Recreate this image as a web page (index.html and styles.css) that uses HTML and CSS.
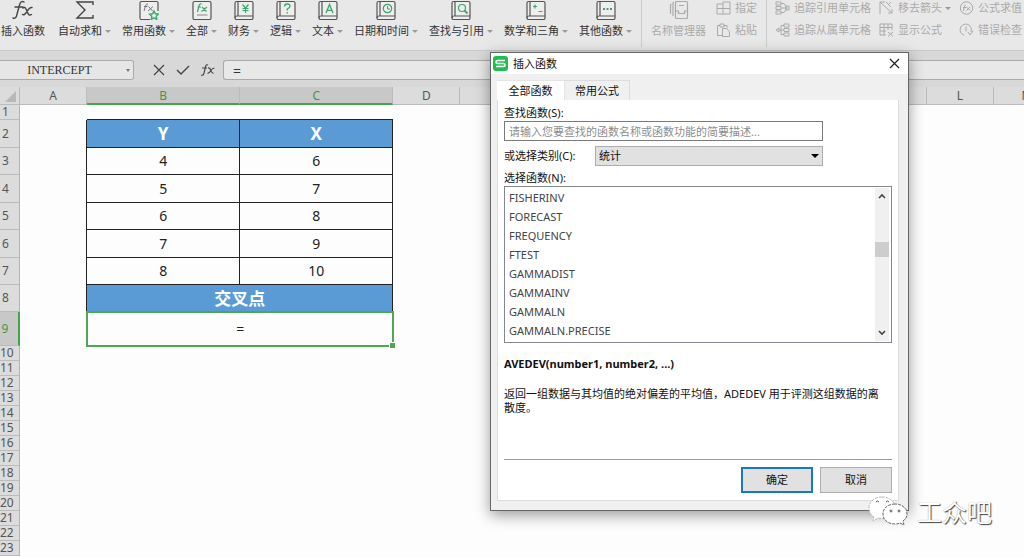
FILE: index.html
```html
<!DOCTYPE html>
<html lang="zh-CN">
<head>
<meta charset="utf-8">
<title>插入函数</title>
<link rel="stylesheet" href="styles.css">
</head>
<body>
<svg class="defs" aria-hidden="true">
  <symbol id="book" viewBox="0 0 20 20"><g fill="none" stroke="#555" stroke-width="1.2"><rect x="1" y="1.500" width="18" height="18" rx="1.500" fill="#eee"/><path d="M4 2v14M1 18q0-2 2-2h16"/></g></symbol>
</svg>
<div class="app">
  <header class="ribbon">
    <div class="tools">
      <button class="tool first"><svg width="24" height="20" viewBox="0 0 24 20"><g fill="none" stroke="#444" stroke-width="1.4" stroke-linecap="round"><path d="M13 2q-3-2-4.500 3L5.500 16q-1 3-3.500 2M4 7h8M12 8q2-1.500 3 1l2 4.500q1 2.500 3.500 1M21 7.500q-2-.5-4 2.500l-2.500 3.500q-1.500 2-3 1"/></g></svg><span>插入函数</span></button>
      <button class="tool"><svg width="20" height="20" viewBox="0 0 20 20"><path d="M18 5V2H2l8 8-8 8h16v-3" fill="none" stroke="#444" stroke-width="1.400"/></svg><span class="drop">自动求和</span></button>
      <button class="tool"><svg width="20" height="20" viewBox="0 0 20 20"><path d="M11 19.500H2.500q-1.500 0-1.500-1.500V3q0-1.500 1.500-1.500h15q1.500 0 1.500 1.500v8" fill="#eee" stroke="#555" stroke-width="1.200"/><path d="M9 4q-2-.5-2.500 2L5 11M5 6.500h3.500M9.500 6.500l4 4.500M14 6.500l-5 4.500" fill="none" stroke="#777"/><path d="M15 11l1.400 2.800 3 .4-2.200 2.100.5 3-2.700-1.400-2.700 1.400.5-3-2.200-2.100 3-.4z" fill="#e4f3e9" stroke="#3aa66a" stroke-width="1.400"/></svg><span class="drop">常用函数</span></button>
      <button class="tool"><svg width="20" height="20" viewBox="0 0 20 20"><rect x="1" y="1.500" width="18" height="18" rx="1.500" fill="#eee" stroke="#555" stroke-width="1.200"/><path d="M9.500 4q-2-.5-2.500 2l-1.500 6M5.500 7H9M10 7l4.500 4.500M15 7l-5.500 4.500" fill="none" stroke="#3aa66a" stroke-width="1.200"/><path d="M5 15h10.500" stroke="#888"/></svg><span class="drop">全部</span></button>
      <button class="tool"><svg width="20" height="20" viewBox="0 0 20 20"><use href="#book"/><path d="M8.500 4.500l3 3.500 3-3.500M11.500 8v5M8.500 8.500h6M8.500 10.500h6" fill="none" stroke="#3aa66a" stroke-width="1.200"/></svg><span class="drop">财务</span></button>
      <button class="tool"><svg width="20" height="20" viewBox="0 0 20 20"><use href="#book"/><path d="M8.500 6.500q0-2.500 2.800-2.500t2.700 2.300q0 1.500-2.700 2.700v1.500M11.300 12v1.500" fill="none" stroke="#3aa66a" stroke-width="1.300"/></svg><span class="drop">逻辑</span></button>
      <button class="tool"><svg width="20" height="20" viewBox="0 0 20 20"><use href="#book"/><path d="M8 13l3.500-8.500L15 13M9.200 10.300h4.600" fill="none" stroke="#3aa66a" stroke-width="1.300"/></svg><span class="drop">文本</span></button>
      <button class="tool"><svg width="20" height="20" viewBox="0 0 20 20"><use href="#book"/><circle cx="11.500" cy="8.500" r="4.200" fill="none" stroke="#3aa66a" stroke-width="1.200"/><path d="M11.500 6v3h2.500" fill="none" stroke="#3aa66a"/></svg><span class="drop">日期和时间</span></button>
      <button class="tool"><svg width="20" height="20" viewBox="0 0 20 20"><use href="#book"/><circle cx="11" cy="8" r="3.500" fill="none" stroke="#3aa66a" stroke-width="1.200"/><path d="M13.500 10.500l3 3" stroke="#3aa66a" stroke-width="1.800"/></svg><span class="drop">查找与引用</span></button>
      <button class="tool"><svg width="20" height="20" viewBox="0 0 20 20"><use href="#book"/><path d="M9 4.500v4M7 6.500h4M12.500 11.500h4" stroke="#3aa66a" stroke-width="1.200"/></svg><span class="drop">数学和三角</span></button>
      <button class="tool"><svg width="20" height="20" viewBox="0 0 20 20"><use href="#book"/><path d="M7 9h2M10.500 9h2M14 9h2" stroke="#3aa66a" stroke-width="1.800"/></svg><span class="drop">其他函数</span></button>
    </div>
    <div class="tools manage">
      <button class="tool" disabled><svg width="20" height="20" viewBox="0 0 20 20"><g fill="none" stroke="#aaa" stroke-width="1.200"><path d="M1.500 14V5q0-1 1-1M4 16V3.500q0-1 1-1M7.500 1.500h10q1 0 1 1v15q0 1-1 1h-10q-1 0-1-1v-15q0-1 1-1z"/><path d="M6.500 11h3v2.500h6V11h3M10 5.500h5"/></g></svg><span>名称管理器</span></button>
      <div class="stack">
        <button class="mini" disabled><svg width="15" height="14" viewBox="0 0 15 14"><path d="M1 3h6V1h7v12H1zM7 3v10M1 7.500h13" fill="none" stroke="#aaa"/></svg>指定</button>
        <button class="mini" disabled><svg width="15" height="14" viewBox="0 0 15 14"><path d="M6 12.500H1.500v-10H4M8 2.500h3V5M4 1h4v3H4zM6.500 5.500h4l3 3v5h-7z" fill="none" stroke="#aaa"/></svg>粘贴</button>
      </div>
    </div>
    <div class="tools audit">
      <div class="stack">
        <button class="mini" disabled><svg width="15" height="14" viewBox="0 0 15 14"><path d="M1 1h5v3H1zM1 5.500h5v3H1zM1 10h5v3H1zM6 2.500h3l3 4.500M6 11.500h3l3-4.500M6 7h5M11 5h3v4h-3z" fill="none" stroke="#aaa"/></svg>追踪引用单元格</button>
        <button class="mini" disabled><svg width="15" height="14" viewBox="0 0 15 14"><path d="M9 1h5v3H9zM9 5.500h5v3H9zM9 10h5v3H9zM9 2.500H6v9h3M6 7h3M4 5L1 7l3 2zM4 7h2" fill="none" stroke="#aaa"/></svg>追踪从属单元格</button>
      </div>
      <div class="stack">
        <button class="mini" disabled><svg width="15" height="14" viewBox="0 0 15 14"><path d="M1 1l12 11M1 1h5M1 1v12M13 12V8M13 12H9M7 1l5 5M12 1L9 4" fill="none" stroke="#aaa"/></svg><span class="drop">移去箭头</span></button>
        <button class="mini" disabled><svg width="15" height="14" viewBox="0 0 15 14"><path d="M7 12H1V1h12v6M1 4.500h12M5 1v11M9 1v6M1 8h6M9 9l5 4.500M14 9l-5 4.500" fill="none" stroke="#aaa"/></svg>显示公式</button>
      </div>
      <div class="stack">
        <button class="mini" disabled><svg width="15" height="14" viewBox="0 0 15 14"><circle cx="7.500" cy="7" r="6.200" fill="none" stroke="#aaa"/><path d="M7 4q-1.500 0-2 3l-.5 3M4 6.500h3M7.500 6l3.500 3.500M11 6L7.500 9.500" fill="none" stroke="#aaa"/></svg>公式求值</button>
        <button class="mini" disabled><svg width="15" height="14" viewBox="0 0 15 14"><path d="M5 12.200A5.700 5.700 0 1 1 12 9M7 3.500v5M9 9l2 3 3-4" fill="none" stroke="#aaa"/></svg>错误检查</button>
      </div>
    </div>
  </header>

  <div class="formula-bar">
    <div class="name-box"><input aria-label="名称框" value="INTERCEPT"><i class="caret"></i></div>
    <div class="formula-actions">
      <button aria-label="取消输入"><svg width="14" height="14" viewBox="0 0 14 14"><path d="M2 2l10 10M12 2L2 12" stroke="#444" stroke-width="1.200"/></svg></button>
      <button aria-label="确认输入"><svg width="14" height="14" viewBox="0 0 14 14"><path d="M1 7l4 4 8-8" fill="none" stroke="#444" stroke-width="1.400"/></svg></button>
      <button aria-label="函数"><svg width="16" height="14" viewBox="0 0 16 14"><path d="M8 2Q6 1 5.500 4L4 10q-.5 3-3 2M2 5h5M8 5q2-.5 2.500 2t3 3.500M14.500 5q-2 0-3.500 2.500T7.500 10.500" fill="none" stroke="#444" stroke-width="1.200"/></svg></button>
    </div>
    <input class="formula" aria-label="编辑栏" value="=">
  </div>

  <main class="sheet">
    <table class="grid">
      <colgroup><col class="c-head"><col class="c-std"><col class="c-wide"><col class="c-wide"><col class="c-std"><col class="c-std"><col class="c-slim"><col class="c-std"><col class="c-slim"><col class="c-std"><col class="c-slim"><col class="c-std"><col class="c-std"><col class="c-std"></colgroup>
      <thead>
        <tr><th class="corner"><svg width="11" height="11" viewBox="0 0 11 11"><path d="M11 0v11H0z" fill="#b8b8b8"/></svg></th><th>A</th><th class="on">B</th><th class="on">C</th><th>D</th><th>E</th><th>F</th><th>G</th><th>H</th><th>I</th><th>J</th><th>K</th><th>L</th><th>M</th></tr>
      </thead>
      <tbody>
        <tr><th>1</th><td></td><td class="above"></td><td class="above"></td></tr>
        <tr class="mid"><th>2</th><td class="before"></td><td class="cell title">Y</td><td class="cell title">X</td></tr>
        <tr class="mid"><th>3</th><td class="before"></td><td class="cell">4</td><td class="cell">6</td></tr>
        <tr class="mid"><th>4</th><td class="before"></td><td class="cell">5</td><td class="cell">7</td></tr>
        <tr class="mid"><th>5</th><td class="before"></td><td class="cell">6</td><td class="cell">8</td></tr>
        <tr class="mid"><th>6</th><td class="before"></td><td class="cell">7</td><td class="cell">9</td></tr>
        <tr class="mid"><th>7</th><td class="before"></td><td class="cell">8</td><td class="cell">10</td></tr>
        <tr class="mid last"><th>8</th><td class="before"></td><td class="cell title merged" colspan="2">交叉点</td></tr>
        <tr class="tall"><th class="on">9</th><td></td><td class="active" colspan="2">=</td></tr>
        <tr><th>10</th></tr><tr><th>11</th></tr><tr><th>12</th></tr><tr><th>13</th></tr><tr><th>14</th></tr><tr><th>15</th></tr><tr><th>16</th></tr><tr><th>17</th></tr><tr><th>18</th></tr><tr><th>19</th></tr><tr><th>20</th></tr><tr><th>21</th></tr><tr><th>22</th></tr><tr><th>23</th></tr>
      </tbody>
    </table>
  </main>

  <section class="dialog" role="dialog" aria-labelledby="dlg-title">
    <div class="titlebar">
      <svg width="15" height="15" viewBox="0 0 15 15"><rect width="15" height="15" rx="3" fill="#1fbf4f"/><path d="M12 4.500H4.500Q3 4.500 3 6t1.500 1.500h6Q12 7.500 12 9t-1.500 1.500H3" fill="none" stroke="#fff" stroke-width="1.600"/></svg>
      <h1 id="dlg-title">插入函数</h1>
      <button class="close" aria-label="关闭"><svg width="11" height="11" viewBox="0 0 11 11"><path d="M1 1l9 9M10 1l-9 9" stroke="#222" stroke-width="1.200"/></svg></button>
    </div>
    <div class="tabs" role="tablist">
      <button class="tab current" role="tab" aria-selected="true">全部函数</button>
      <button class="tab" role="tab" aria-selected="false">常用公式</button>
    </div>
    <div class="panel">
      <label for="search">查找函数(S):</label>
      <input id="search" class="search" placeholder="请输入您要查找的函数名称或函数功能的简要描述...">
      <div class="category">
        <label for="category">或选择类别(C):</label>
        <div class="select"><select id="category"><option>统计</option></select><i class="arrow"></i></div>
      </div>
      <label for="functions">选择函数(N):</label>
      <div class="list">
        <select id="functions" size="8">
          <option>FISHERINV</option><option>FORECAST</option><option>FREQUENCY</option><option>FTEST</option><option>GAMMADIST</option><option>GAMMAINV</option><option>GAMMALN</option><option>GAMMALN.PRECISE</option>
        </select>
        <div class="scroll" aria-hidden="true">
          <svg width="8" height="6" viewBox="0 0 8 6"><path d="M1 5l3-3 3 3" fill="none" stroke="#444" stroke-width="1.600"/></svg>
          <span class="track"><span class="thumb"></span></span>
          <svg width="8" height="6" viewBox="0 0 8 6"><path d="M1 1l3 3 3-3" fill="none" stroke="#444" stroke-width="1.600"/></svg>
        </div>
      </div>
      <h2>AVEDEV(number1, number2, ...)</h2>
      <p>返回一组数据与其均值的绝对偏差的平均值，ADEDEV 用于评测这组数据的离散度。</p>
      <div class="actions">
        <button class="btn primary">确定</button>
        <button class="btn">取消</button>
      </div>
    </div>
  </section>

  <div class="watermark">
    <svg width="40" height="32" viewBox="0 0 40 32"><g fill="#fff" stroke="#666" stroke-width="1" stroke-dasharray="3 1"><path d="M14 1C6 1 1 6 1 12q0 6 5 9l-1 4 5-3q12 2 17-5 2-5-1-10-4-6-12-6z" stroke="#bbb"/><path d="M27 8c-7 0-12 4-12 10s5 10 12 10q3 0 5-1l4 2-1-4q4-3 4-7c0-6-5-10-12-10z"/></g><g fill="none" stroke="#555"><path d="M8 6q1.500-2 3 0M18 6q1.500-2 3 0"/><circle cx="23" cy="15" r="1"/><circle cx="31" cy="15" r="1"/></g></svg>
    <span>工众吧</span>
  </div>
</div>
</body>
</html>
```

FILE: styles.css
```css
* { box-sizing: border-box; }
body {
  margin: 0;
  background: #fdfdfd;
  color: #333;
  font: 11px/16px "Noto Sans", "Noto Sans CJK SC", sans-serif;
}
button, input, select { font: inherit; color: inherit; margin: 0; }
button { padding: 0; border: 0; background: none; white-space: nowrap; }
svg { display: block; flex: none; }
.defs { position: absolute; width: 0; height: 0; }
.app { position: relative; height: 100vh; overflow: hidden; }

.ribbon {
  display: flex;
  height: 51px;
  background: #e8e8e8;
  border-bottom: 1px solid #c8c8c8;
  overflow: hidden;
}
.tools { display: flex; flex: none; align-items: flex-start; gap: 11px; padding-left: 1px; }
.tool { display: flex; flex-direction: column; align-items: center; gap: 3px; }
.first { margin-right: 2px; }
.drop::after {
  content: "";
  display: inline-block;
  margin-left: 3px;
  vertical-align: 2px;
  border: 3px solid transparent;
  border-top-color: #999;
  border-bottom: 0;
}
.manage, .audit {
  height: 47px;
  margin-left: 9px;
  padding-left: 9px;
  border-left: 1px solid #ccc;
  gap: 10px;
}
.audit { gap: 8px; padding-left: 8px; }
.tool:disabled, .mini:disabled { color: #aaa; }
.stack { display: flex; flex-direction: column; gap: 6px; }
.mini { display: flex; align-items: center; gap: 4px; }

.formula-bar {
  display: flex;
  align-items: center;
  height: 36px;
  padding: 2px 0 0;
  background: #d8d8d8;
}
.name-box {
  display: flex;
  align-items: center;
  width: 134px;
  height: 20px;
  padding-right: 3px;
  border: 1px solid #aaa;
  border-left: 0;
  border-radius: 0 3px 3px 0;
  background: #e6e6e6;
}
.name-box input {
  flex: 1;
  min-width: 0;
  padding: 0 7px 0 0;
  border: 0;
  background: none;
  text-align: center;
  font: 12px/16px "Liberation Serif", serif;
}
.caret { border: 2px solid transparent; border-top: 3px solid #777; border-bottom: 0; }
.formula-actions { display: flex; gap: 10px; padding: 0 7px 0 18px; }
.formula {
  flex: 1;
  height: 20px;
  padding: 0 9px;
  border: 1px solid #aaa;
  border-right: 0;
  border-radius: 3px 0 0 3px;
  background: #e8e8e8;
  font-size: 14px;
}

.grid { width: 1061px; table-layout: fixed; border-collapse: separate; border-spacing: 0; }
.c-head { width: 20px; }
.c-wide { width: 153px; }
.c-std { width: 67px; }
.c-slim { width: 66px; }
.grid th {
  height: 15px;
  padding: 0;
  border-right: 1px solid #b4b4b4;
  border-bottom: 1px solid #bbb;
  background: #dcdcdc;
  color: #555;
  font-size: 12px;
  font-weight: 400;
  line-height: 14px;
}
.grid thead th { height: 18px; line-height: 16px; border-right-color: #bbb; }
.grid tbody th { padding-right: 8px; text-align: center; }
.grid thead .on { background: #c8c8c8; color: #3f9a45; border-bottom: 2px solid #45a54c; line-height: 15px; }
.grid tbody .on { background: #c8c8c8; color: #3f9a45; border-right: 2px solid #45a54c; }
.grid .corner svg { margin: 2px 0 0 5px; }
.grid td { padding: 0; text-align: center; color: #222; font-size: 14px; line-height: 18px; }
.grid tbody td:empty { font-size: 11px; line-height: 14px; }
.grid .mid th { height: 28px; }
.grid .mid:nth-child(odd) th, .grid .last th { height: 27px; }
.grid .tall th { height: 34px; }
.grid .above { border-bottom: 1px solid #222; }
.grid .before { border-right: 1px solid #222; }
.grid .cell { border-right: 1px solid #222; border-bottom: 1px solid #222; }
.grid .title { background: #5b9bd5; color: #fff; font-size: 17px; font-weight: 700; line-height: 20px; }
.grid .merged { border-bottom: 0; }
.grid .active { position: relative; outline: 2px solid #4ea853; outline-offset: -1px; }
.grid .active::after {
  content: "";
  position: absolute;
  right: -2px;
  bottom: -2px;
  width: 5px;
  height: 5px;
  border: 1px solid #fff;
  border-right: 0;
  border-bottom: 0;
  background: #4ea853;
}

.dialog {
  position: absolute;
  left: 490px;
  top: 52px;
  width: 419px;
  padding-bottom: 9px;
  border: 1px solid #666;
  background: #f0f0f0;
  color: #111;
  box-shadow: 0 4px 14px rgba(0, 0, 0, .4);
}
.titlebar { display: flex; align-items: center; gap: 5px; height: 21px; padding: 0 8px 0 2px; background: #fff; }
.titlebar h1 { margin: 0; font-size: 11px; font-weight: 400; }
.close { margin-left: auto; }
.tabs { display: flex; padding: 6px 6px 0; }
.tab { width: 65px; height: 20px; border: 1px solid #dcdcdc; border-bottom: 0; border-left: 0; }
.current { width: 68px; background: #fff; border-color: #e4e4e4; }
.panel {
  display: flex;
  flex-direction: column;
  margin: 0 9px 0 6px;
  padding: 5px 6px 7px;
  border: 1px solid #dcdcdc;
  border-top: 0;
  background: #fff;
}
.search { width: 319px; height: 20px; padding: 0 4px; border: 1px solid #7a7a7a; background: #fff; }
.search::placeholder { color: #8c8c8c; opacity: 1; }
.category { display: flex; align-items: center; margin: 5px 0 4px; }
.category label { width: 91px; }
.select { position: relative; width: 228px; }
.select select {
  display: block;
  appearance: none;
  width: 100%;
  height: 20px;
  padding: 0 3px;
  border: 1px solid #adadad;
  border-radius: 0;
  background: #e1e1e1;
}
.arrow { position: absolute; right: 4px; top: 8px; border: 4px solid transparent; border-top-color: #000; border-bottom: 0; }
.list { display: flex; height: 157px; padding: 1px 2px 1px 0; border: 1px solid #828790; }
.list select { flex: 1; appearance: none; border: 0; padding: 2px 0 0; background: none; overflow: hidden; color: #444; }
.list option { height: 19px; min-height: 19px; padding: 0 4px; line-height: 19px; }
.scroll { display: flex; flex-direction: column; align-items: center; width: 14px; padding: 5px 0; background: #f0f0f0; }
.track { flex: 1; width: 14px; padding-top: 43px; }
.thumb { display: block; height: 15px; background: #cdcdcd; }
.panel h2 { margin: 13px 0 15px; font-size: 11px; font-weight: 700; line-height: 16px; }
.panel p { min-height: 72px; margin: 0; padding-right: 6px; line-height: 14px; }
.actions { display: flex; justify-content: flex-end; gap: 7px; padding-top: 7px; border-top: 1px solid #999; }
.btn { width: 72px; height: 26px; border: 1px solid #adadad; background: #e1e1e1; }
.primary { border: 2px solid #1a78c8; }

.watermark { position: absolute; left: 868px; top: 496px; display: flex; align-items: center; gap: 9px; }
.watermark span {
  color: #fff;
  font-size: 25px;
  line-height: 32px;
  text-shadow: 1px 1px 1px #444, 0 0 1px #999;
}
```
